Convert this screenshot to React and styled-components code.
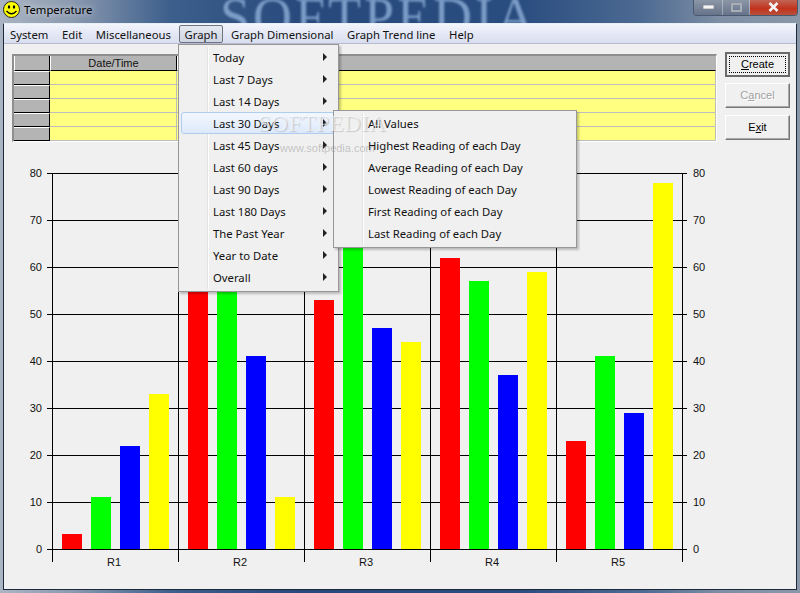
import React from "react";
import styled, { createGlobalStyle } from "styled-components";

const GlobalStyle = createGlobalStyle`
  html, body {
    margin: 0;
    padding: 0;
    background: #2b4a76;
  }
`;

const UI_FONT = `"Noto Sans", "Open Sans", sans-serif`;
const OLD_FONT = `"Liberation Sans", Arial, sans-serif`;

const Window = styled.div`
  position: relative;
  width: 800px;
  height: 593px;
  overflow: hidden;
  display: flex;
  flex-direction: column;
  font-family: ${UI_FONT};
  color: #111;
  background: linear-gradient(90deg, #aab4c2 0, #8c9bb0 70px, #3d5f8c 170px, #27497c 300px, #2a4d80 520px, #4c6a92 640px, #7e8ea4 720px, #8a97a8 800px);
`;

const TitleBar = styled.div`
  position: relative;
  height: 23px;
  flex: none;
  display: flex;
  align-items: center;
  padding: 0 0 4px 3px;
  box-sizing: border-box;
  overflow: hidden;
`;

const TitleText = styled.span`
  font-size: 11.3px;
  margin-left: 4px;
  color: #000;
  text-shadow: 0 0 6px rgba(255, 255, 255, 0.8);
`;

const Brand = styled.span`
  position: absolute;
  left: 220px;
  top: 5px;
  font-family: "Liberation Serif", serif;
  font-size: 54px;
  line-height: 24px;
  letter-spacing: 3px;
  color: #8fb0d8;
  opacity: 0.8;
  filter: blur(1px);
`;

const WinButtons = styled.div`
  position: absolute;
  top: -1px;
  right: 2px;
  display: flex;
  height: 16px;
  border: 1px solid #4a5a6e;
  border-top: none;
  border-radius: 0 0 4px 4px;
  overflow: hidden;
`;

const WinButton = styled.div`
  width: ${(p) => p.$w}px;
  display: flex;
  justify-content: center;
  align-items: center;
  background: ${(p) => p.$bg};
  border-right: 1px solid rgba(255, 255, 255, 0.35);
  &:last-child {
    border-right: none;
  }
`;

const Client = styled.div`
  flex: 1;
  margin: 0 3px 3px 3px;
  background: #f0f0f0;
  border: 1px solid #1d2a3e;
  border-top-color: #e8eef6;
  box-sizing: border-box;
  display: flex;
  flex-direction: column;
  min-height: 0;
`;

const MenuBar = styled.div`
  height: 20px;
  flex: none;
  display: flex;
  align-items: center;
  gap: 1.6px;
  box-sizing: border-box;
  background: linear-gradient(180deg, #f3f5fc 0, #e6e9f6 45%, #d9deef 100%);
  border-bottom: 1px solid #b5bbd0;
`;

const MenuItem = styled.div`
  height: 18px;
  line-height: 17px;
  font-size: 11.3px;
  padding: 0 5px;
  box-sizing: border-box;
  border: 1px solid ${(p) => (p.$open ? "#6d7480" : "transparent")};
  border-radius: 2px;
  background: ${(p) => (p.$open ? "linear-gradient(180deg,#e6e9f0,#cfd4e2)" : "none")};
`;

const TopRow = styled.div`
  display: flex;
  align-items: flex-start;
  padding: 10px 6px 0 8px;
  height: 99px;
  flex: none;
  box-sizing: border-box;
`;

const Grid = styled.div`
  width: 705px;
  height: 88px;
  flex: none;
  box-sizing: border-box;
  border: 1px solid;
  border-color: #8f8f8f #fff #fff #8f8f8f;
  border-width: 2px 1px 1px 2px;
  display: grid;
  grid-template-columns: 36px 127px 1fr;
  grid-template-rows: 15px repeat(5, 14px);
  background: #ffff80;
`;

const HeadCell = styled.div`
  background: #b4b4b4;
  border-bottom: 1px solid #000;
  border-right: 1px solid ${(p) => (p.$last ? "#b4b4b4" : "#000")};
  border-left: 1px solid #fff;
  box-sizing: border-box;
  font: 11px/14px ${OLD_FONT};
  text-align: center;
`;

const RowHead = styled.div`
  background: #b4b4b4;
  border-bottom: 1px solid #000;
  border-right: 1px solid #000;
  border-top: 1px solid #fff;
  box-sizing: border-box;
`;

const Cell = styled.div`
  background: #ffff80;
  border-bottom: 1px solid #bdbdbd;
  border-right: 1px solid #bdbdbd;
  box-sizing: border-box;
`;

const ButtonColumn = styled.div`
  margin-left: 8px;
  margin-top: -2px;
  flex: none;
  display: flex;
  flex-direction: column;
  gap: 6px;
`;

const PushButton = styled.div`
  width: 65px;
  height: 25px;
  margin-top: ${(p) => p.$mt || 0}px;
  padding-bottom: ${(p) => (p.$default ? 0 : 2)}px;
  box-sizing: border-box;
  display: flex;
  align-items: center;
  justify-content: center;
  font: 11px ${OLD_FONT};
  background: #f0f0f0;
  color: ${(p) => (p.$disabled ? "#a0a0a0" : "#000")};
  border: ${(p) => (p.$default ? 2 : 1)}px solid;
  border-color: ${(p) => (p.$default ? "#6a6a6a" : "#fff #777 #777 #fff")};
  box-shadow: ${(p) => (p.$default ? "none" : "inset -1px -1px 0 #a8a8a8")};
  text-shadow: ${(p) => (p.$disabled ? "1px 1px 0 #fff" : "none")};
  u {
    text-underline-offset: 1px;
  }
`;

const FocusBox = styled.span`
  display: flex;
  align-items: center;
  justify-content: center;
  width: 57px;
  height: 17px;
  padding-bottom: 2px;
  box-sizing: border-box;
  border: 1px dotted #000;
`;

const ChartFrame = styled.svg`
  display: block;
  flex: none;
  width: 792px;
  height: 446px;
  font-family: ${OLD_FONT};
  font-size: 11px;
`;

const Dropdown = styled.div`
  position: absolute;
  left: ${(p) => p.$left}px;
  top: ${(p) => p.$top}px;
  width: ${(p) => p.$width}px;
  box-sizing: border-box;
  padding: 1px 2px 3px;
  background: #f0f0f0;
  border: 1px solid #979797;
  box-shadow: 2px 2px 2px rgba(0, 0, 0, 0.22);
  z-index: ${(p) => p.$z};
  &::before {
    content: "";
    position: absolute;
    top: 2px;
    bottom: 2px;
    left: 28px;
    width: 2px;
    background: linear-gradient(90deg, #e2e3e3 50%, #fff 50%);
  }
`;

const DropItem = styled.div`
  position: relative;
  height: 22px;
  display: flex;
  align-items: center;
  justify-content: space-between;
  box-sizing: border-box;
  padding: 0 8px 0 31px;
  font-size: 11.3px;
  border: 1px solid ${(p) => (p.$active ? "#aeccf0" : "transparent")};
  border-radius: 3px;
  background: ${(p) => (p.$active ? "linear-gradient(180deg,#f2f7fe,#dde9fa)" : "none")};
`;

const Arrow = styled.span`
  width: 0;
  height: 0;
  border-left: 4px solid #222;
  border-top: 4px solid transparent;
  border-bottom: 4px solid transparent;
`;

const Watermark = styled.div`
  position: absolute;
  left: 258px;
  top: 110px;
  z-index: 5;
  pointer-events: none;
  font-family: "Liberation Serif", serif;
  font-size: 23px;
  line-height: 28px;
  letter-spacing: 0.5px;
  color: rgba(255, 255, 255, 0.55);
  text-shadow: 1px 1px 1px rgba(110, 110, 110, 0.3);
`;

const WatermarkUrl = styled.div`
  position: absolute;
  left: 280px;
  top: 142px;
  z-index: 5;
  pointer-events: none;
  font-family: "Liberation Sans", sans-serif;
  font-size: 11px;
  color: rgba(120, 120, 120, 0.4);
`;

const graphItems = ["Today", "Last 7 Days", "Last 14 Days", "Last 30 Days", "Last 45 Days", "Last 60 days", "Last 90 Days", "Last 180 Days", "The Past Year", "Year to Date", "Overall"];
const readingItems = ["All Values", "Highest Reading of each Day", "Average Reading of each Day", "Lowest Reading of each Day", "First Reading of each Day", "Last Reading of each Day"];

const series = [
  { label: "R1", values: [3.2, 11, 22, 33] },
  { label: "R2", values: [60, 60, 41, 11] },
  { label: "R3", values: [53, 66, 47, 44] },
  { label: "R4", values: [62, 57, 37, 59] },
  { label: "R5", values: [23, 41, 29, 77.9] },
];
const barColors = ["#ff0000", "#00ff00", "#0000ff", "#ffff00"];
const ticks = [0, 10, 20, 30, 40, 50, 60, 70, 80];

// chart origin is relative to the client area
const X0 = 48;
const Y0 = 406;
const GROUP = 126;
const UNIT = 4.7;

const Chart = () => (
  <ChartFrame viewBox="0 0 792 446">
    {ticks.map((t) => {
      const y = Math.round(Y0 - t * UNIT) + 0.5;
      return (
        <g key={t}>
          <line x1={X0 - 5} x2={X0 + GROUP * 5 + 5} y1={y} y2={y} stroke="#000" />
          <text x={X0 - 10} y={y + 3} textAnchor="end" fill="#111">{t}</text>
          <text x={X0 + GROUP * 5 + 11} y={y + 3} fill="#111">{t}</text>
        </g>
      );
    })}
    {[0, 1, 2, 3, 4, 5].map((i) => (
      <line key={i} x1={X0 + i * GROUP + 0.5} x2={X0 + i * GROUP + 0.5} y1={Y0 - 80 * UNIT} y2={Y0 + 13} stroke="#000" />
    ))}
    {series.map((s, i) => (
      <g key={s.label}>
        {s.values.map((v, j) => (
          <rect key={j} x={X0 + i * GROUP + 10 + j * 29} y={Math.round(Y0 - v * UNIT)} width={20} height={Math.round(v * UNIT)} fill={barColors[j]} />
        ))}
        <text x={X0 + i * GROUP + GROUP / 2 - 1} y={Y0 + 17} textAnchor="middle" fill="#111">{s.label}</text>
      </g>
    ))}
  </ChartFrame>
);

export default function App() {
  const rows = [0, 1, 2, 3, 4];
  return (
    <Window>
      <GlobalStyle />
      <TitleBar>
        <svg width="17" height="17" viewBox="0 0 17 17">
          <circle cx="8.5" cy="8.5" r="8" fill="#ffff00" stroke="#222" />
          <ellipse cx="6" cy="6" rx="1.2" ry="1.8" fill="#000" />
          <ellipse cx="11" cy="6" rx="1.2" ry="1.8" fill="#000" />
          <path d="M3.5 10 Q8.5 15.5 13.5 10" fill="none" stroke="#000" strokeWidth="1.3" />
        </svg>
        <TitleText>Temperature</TitleText>
        <Brand>SOFTPEDIA</Brand>
        <WinButtons>
          <WinButton $w={28} $bg="linear-gradient(180deg,#8e99a8,#66738a)">
            <svg width="11" height="4"><rect width="11" height="4" fill="#f4f4f4" stroke="#555" strokeWidth="0.5" /></svg>
          </WinButton>
          <WinButton $w={26} $bg="linear-gradient(180deg,#8e99a8,#66738a)">
            <svg width="11" height="9"><rect x="1" y="1" width="9" height="7" fill="none" stroke="#a8aeb6" strokeWidth="2" /></svg>
          </WinButton>
          <WinButton $w={47} $bg="linear-gradient(180deg,#c06a5c,#c2331c 60%,#b8503c)">
            <svg width="11" height="10" viewBox="0 0 11 10"><path d="M1.5 1 L9.5 9 M9.5 1 L1.5 9" stroke="#f4f4f4" strokeWidth="2.6" /></svg>
          </WinButton>
        </WinButtons>
      </TitleBar>
      <Client>
        <MenuBar>
          <MenuItem>System</MenuItem>
          <MenuItem>Edit</MenuItem>
          <MenuItem>Miscellaneous</MenuItem>
          <MenuItem $open>Graph</MenuItem>
          <MenuItem>Graph Dimensional</MenuItem>
          <MenuItem>Graph Trend line</MenuItem>
          <MenuItem>Help</MenuItem>
        </MenuBar>
        <TopRow>
          <Grid>
            <HeadCell />
            <HeadCell>Date/Time</HeadCell>
            <HeadCell $last />
            {rows.map((r) => (
              <React.Fragment key={r}>
                <RowHead />
                <Cell />
                <Cell />
              </React.Fragment>
            ))}
          </Grid>
          <ButtonColumn>
            <PushButton $default>
              <FocusBox><span><u>C</u>reate</span></FocusBox>
            </PushButton>
            <PushButton $disabled><span>C<u>a</u>ncel</span></PushButton>
            <PushButton $mt={1}><span>E<u>x</u>it</span></PushButton>
          </ButtonColumn>
        </TopRow>
        <Chart />
      </Client>
      <Dropdown $left={178} $top={44} $width={161} $z={3}>
        {graphItems.map((g) => (
          <DropItem key={g} $active={g === "Last 30 Days"}>
            {g}
            <Arrow />
          </DropItem>
        ))}
      </Dropdown>
      <Dropdown $left={333} $top={110} $width={244} $z={4}>
        {readingItems.map((g) => (
          <DropItem key={g}>{g}</DropItem>
        ))}
      </Dropdown>
      <Watermark>SOFTPEDIA</Watermark>
      <WatermarkUrl>www.softpedia.com</WatermarkUrl>
    </Window>
  );
}
